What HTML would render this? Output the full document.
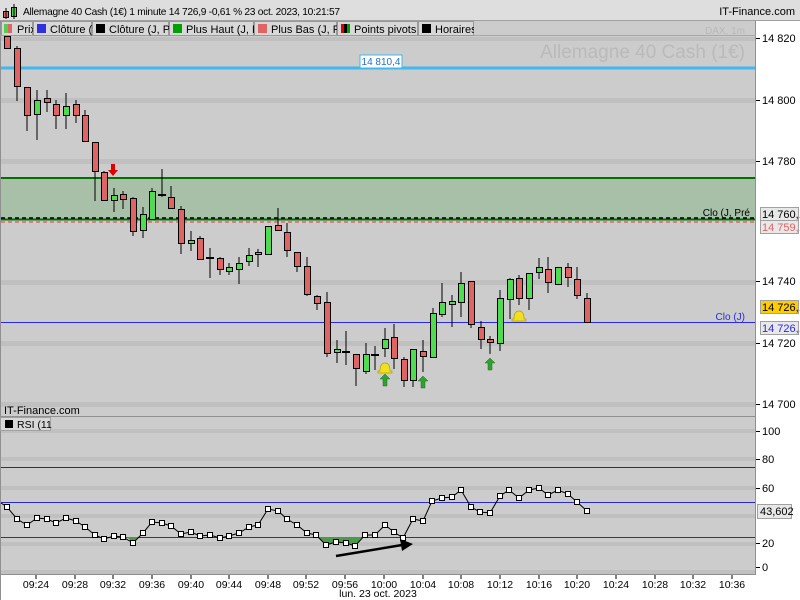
<!DOCTYPE html>
<html><head><meta charset="utf-8"><style>
*{margin:0;padding:0}
body{width:800px;height:600px;overflow:hidden;background:#fff;font-family:"Liberation Sans",sans-serif;position:relative}
svg{position:absolute;left:0;top:0}
text{font-family:"Liberation Sans",sans-serif}
</style></head><body>
<svg width="800" height="600" viewBox="0 0 800 600">
<!-- title bar -->
<rect x="0" y="0" width="800" height="21" fill="#dedede"/>
<line x1="0" y1="20.5" x2="800" y2="20.5" stroke="#a0a0a0"/>
<rect x="3.5" y="11.5" width="5" height="6" fill="#e06464" stroke="#000"/>
<line x1="6" y1="8" x2="6" y2="19" stroke="#000"/>
<rect x="11.5" y="7.5" width="5" height="9" fill="#50d050" stroke="#000"/>
<line x1="14" y1="4" x2="14" y2="19" stroke="#000"/>
<text x="23" y="15" font-size="10.2" fill="#000" textLength="317" lengthAdjust="spacing">Allemagne 40 Cash (1€) 1 minute 14 726,9 -0,61 % 23 oct. 2023, 10:21:57</text>
<text x="795" y="15" font-size="11" fill="#000" text-anchor="end">IT-Finance.com</text>
<!-- chart bg -->
<rect x="0" y="21" width="756" height="554" fill="#cccccc"/>
<rect x="756" y="21" width="44" height="579" fill="#fff"/>
<line x1="755.5" y1="21" x2="755.5" y2="575" stroke="#909090"/>
<line x1="0.5" y1="21" x2="0.5" y2="575" stroke="#909090"/>
<!-- bands -->
<g fill="#c0c0c0">
<rect x="1" y="37" width="754" height="4"/>
<rect x="1" y="98" width="754" height="5"/>
<rect x="1" y="159" width="754" height="5"/>
<rect x="1" y="280" width="754" height="5"/>
<rect x="1" y="341" width="754" height="5"/>
<rect x="1" y="402" width="754" height="5"/>
<rect x="1" y="457" width="754" height="4"/>
<rect x="1" y="486" width="754" height="4"/>
<rect x="1" y="514" width="754" height="4"/>
<rect x="1" y="542" width="754" height="4"/>
<rect x="1" y="570" width="754" height="4"/>
<rect x="1" y="429" width="754" height="4"/>
</g>
<!-- legend row -->
<line x1="0" y1="35.5" x2="756" y2="35.5" stroke="#a8a8a8"/>
<g font-size="11" fill="#000">
<svg x="1" y="21" width="32" height="15"><rect x="0.5" y="0.5" width="31" height="14" fill="#d8d8d8" stroke="#999"/>
<rect x="3" y="3" width="4" height="9" fill="#50d050"/><rect x="7" y="3" width="4" height="9" fill="#e06464"/>
<text x="16" y="12">Prix</text></svg>
<svg x="33" y="21" width="59" height="15"><rect x="0.5" y="0.5" width="58" height="14" fill="#d8d8d8" stroke="#999"/>
<rect x="4" y="3" width="9" height="9" fill="#3030e0"/><text x="17" y="12">Clôture (J, Pré</text></svg>
<svg x="92" y="21" width="77" height="15"><rect x="0.5" y="0.5" width="76" height="14" fill="#d8d8d8" stroke="#999"/>
<rect x="4" y="3" width="9" height="9" fill="#000"/><text x="17" y="12">Clôture (J, Pré</text></svg>
<svg x="169" y="21" width="85" height="15"><rect x="0.5" y="0.5" width="84" height="14" fill="#d8d8d8" stroke="#999"/>
<rect x="4" y="3" width="9" height="9" fill="#00a000"/><text x="17" y="12">Plus Haut (J, Pré</text></svg>
<svg x="254" y="21" width="83" height="15"><rect x="0.5" y="0.5" width="82" height="14" fill="#d8d8d8" stroke="#999"/>
<rect x="4" y="3" width="9" height="9" fill="#e06464"/><text x="17" y="12">Plus Bas (J, Pré</text></svg>
<svg x="337" y="21" width="81" height="15"><rect x="0.5" y="0.5" width="80" height="14" fill="#d8d8d8" stroke="#999"/>
<rect x="4" y="3" width="3" height="9" fill="#e00000"/><rect x="7" y="3" width="3" height="9" fill="#000"/><rect x="10" y="3" width="3" height="9" fill="#00a000"/><text x="17" y="12">Points pivots (J</text></svg>
<svg x="418" y="21" width="56" height="15"><rect x="0.5" y="0.5" width="55" height="14" fill="#d8d8d8" stroke="#999"/>
<rect x="4" y="3" width="9" height="9" fill="#000"/><text x="17" y="12">Horaires</text></svg>
</g>
<text x="745" y="34" font-size="10" fill="#b8b8b8" text-anchor="end">DAX, 1m</text>
<text x="745" y="58" font-size="19" fill="#bababa" text-anchor="end">Allemagne 40 Cash (1€)</text>
<!-- levels -->
<rect x="1" y="66.5" width="754" height="3" fill="#40b8f0"/>
<rect x="360" y="55" width="42" height="13" fill="#fff" stroke="#40b8f0"/>
<text x="381" y="65" font-size="10" fill="#2070d0" text-anchor="middle">14 810,4</text>
<rect x="1" y="178" width="754" height="41" fill="#a8c0a8"/>
<line x1="1" y1="178" x2="755" y2="178" stroke="#007000" stroke-width="2"/>
<line x1="1" y1="219.5" x2="755" y2="219.5" stroke="#007000" stroke-width="2"/>
<line x1="1" y1="218" x2="755" y2="218" stroke="#000" stroke-width="1.5" stroke-dasharray="4,3"/>
<line x1="1" y1="222" x2="755" y2="222" stroke="#e06464" stroke-width="1.5" stroke-dasharray="4,3"/>
<text x="750" y="216" font-size="10" fill="#000" text-anchor="end">Clo (J, Pré</text>
<line x1="1" y1="322.5" x2="755" y2="322.5" stroke="#2828e8"/>
<text x="745" y="320" font-size="10" fill="#2828e8" text-anchor="end">Clo (J)</text>
<!-- candles -->
<g stroke="#000" stroke-width="1">
<path d="M7 36V49M17 46V101M27 87V131M37 90V140M47 90V112M56 100V129M66 93V129M76 100V123M85 110V142M95 142V201M104 171V201M114 188V212M123 191V209M133 197V236M143 207V238M152 188V219M162 169V197M171 186V209M181 206V254M191 231V251M200 236V260M210 248V278M220 257V275M229 263V275M239 257V284M249 248V266M258 249V267M268 226V255M278 208V231M287 223V257M297 252V272M307 257V296M317 295V310M327 292V357M337 340V363M346 331V365M356 354V386M366 343V374M375 346V370M385 328V357M394 324V369M404 357V387M413 349V387M423 340V372M433 308V357M442 283V317M452 295V327M461 272V317M471 281V328M481 321V349M490 336V354M500 290V351M510 278V319M519 275V305M529 273V310M539 258V279M548 257V293M558 267V284M568 263V287M577 267V299M587 293V322"/>
<path d="M158 195H166M206 258H214M342 352H350M371 355H379" stroke-width="2"/>
</g>
<g stroke="#000" fill="#e06464">
<rect x="4.5" y="36.5" width="6" height="12"/>
<rect x="14.5" y="48.5" width="6" height="38"/>
<rect x="24.5" y="87.5" width="6" height="28"/>
<rect x="44.5" y="98.5" width="6" height="4"/>
<rect x="53.5" y="104.5" width="6" height="11"/>
<rect x="73.5" y="104.5" width="6" height="11"/>
<rect x="82.5" y="115.5" width="6" height="26"/>
<rect x="92.5" y="142.5" width="6" height="29"/>
<rect x="101.5" y="172.5" width="6" height="28"/>
<rect x="120.5" y="194.5" width="6" height="5"/>
<rect x="130.5" y="198.5" width="6" height="33"/>
<rect x="168.5" y="197.5" width="6" height="11"/>
<rect x="178.5" y="209.5" width="6" height="34"/>
<rect x="197.5" y="238.5" width="6" height="21"/>
<rect x="217.5" y="258.5" width="6" height="11"/>
<rect x="275.5" y="225.5" width="6" height="5"/>
<rect x="284.5" y="232.5" width="6" height="18"/>
<rect x="294.5" y="252.5" width="6" height="14"/>
<rect x="304.5" y="266.5" width="6" height="28"/>
<rect x="314.5" y="296.5" width="6" height="7"/>
<rect x="324.5" y="302.5" width="6" height="51"/>
<rect x="353.5" y="354.5" width="6" height="14"/>
<rect x="391.5" y="337.5" width="6" height="21"/>
<rect x="401.5" y="359.5" width="6" height="21"/>
<rect x="420.5" y="351.5" width="6" height="5"/>
<rect x="468.5" y="281.5" width="6" height="43"/>
<rect x="478.5" y="327.5" width="6" height="12"/>
<rect x="487.5" y="339.5" width="6" height="3"/>
<rect x="516.5" y="278.5" width="6" height="20"/>
<rect x="545.5" y="269.5" width="6" height="13"/>
<rect x="565.5" y="267.5" width="6" height="10"/>
<rect x="574.5" y="279.5" width="6" height="16"/>
<rect x="584.5" y="298.5" width="6" height="24"/>
</g>
<g stroke="#000" fill="#50dc50">
<rect x="34.5" y="100.5" width="6" height="14"/>
<rect x="63.5" y="106.5" width="6" height="9"/>
<rect x="111.5" y="195.5" width="6" height="5"/>
<rect x="140.5" y="214.5" width="6" height="16"/>
<rect x="149.5" y="191.5" width="6" height="28"/>
<rect x="188.5" y="240.5" width="6" height="3"/>
<rect x="226.5" y="267.5" width="6" height="4"/>
<rect x="236.5" y="263.5" width="6" height="6"/>
<rect x="246.5" y="255.5" width="6" height="6"/>
<rect x="255.5" y="252.5" width="6" height="2"/>
<rect x="265.5" y="226.5" width="6" height="28"/>
<rect x="334.5" y="349.5" width="6" height="3"/>
<rect x="363.5" y="354.5" width="6" height="17"/>
<rect x="382.5" y="339.5" width="6" height="9"/>
<rect x="410.5" y="349.5" width="6" height="31"/>
<rect x="430.5" y="313.5" width="6" height="44"/>
<rect x="439.5" y="302.5" width="6" height="12"/>
<rect x="449.5" y="301.5" width="6" height="3"/>
<rect x="458.5" y="283.5" width="6" height="19"/>
<rect x="497.5" y="298.5" width="6" height="45"/>
<rect x="507.5" y="279.5" width="6" height="20"/>
<rect x="526.5" y="273.5" width="6" height="25"/>
<rect x="536.5" y="267.5" width="6" height="5"/>
<rect x="555.5" y="267.5" width="6" height="17"/>
</g>
<!-- markers -->
<path d="M111 164h4v6h3l-5 6l-5-6h3z" fill="#e00000"/>
<g fill="#30a030" stroke="#207020" stroke-width="0.5">
<path d="M385 374l5 5h-3v7h-4v-7h-3z"/>
<path d="M423 376l5 5h-3v7h-4v-7h-3z"/>
<path d="M490 358l5 5h-3v7h-4v-7h-3z"/>
</g>
<g fill="#f0e020" stroke="#b0a000" stroke-width="0.7">
<path d="M380 371q0-8 5-8q5 0 5 8h2v2h-14v-2z"/>
<path d="M514 319q0-8 5-8q5 0 5 8h2v2h-14v-2z"/>
</g>
<!-- separator -->
<rect x="1" y="407" width="754" height="9" fill="#cccccc"/>
<text x="4" y="414" font-size="11" fill="#000">IT-Finance.com</text>
<line x1="0" y1="416.5" x2="756" y2="416.5" stroke="#909090"/>
<!-- price axis -->
<g font-size="11" fill="#000">
<path d="M756 38.5h4M756 100.5h4M756 161.5h4M756 281.5h4M756 343.5h4M756 404.5h4" stroke="#000"/>
<text x="762" y="42">14 820</text>
<text x="762" y="104">14 800</text>
<text x="762" y="165">14 780</text>
<text x="762" y="285">14 740</text>
<text x="762" y="347">14 720</text>
<text x="762" y="408">14 700</text>
<rect x="760.5" y="207.5" width="38" height="13" fill="#e8e8e8" stroke="#a0a0a0"/>
<text x="762" y="218">14 760,.</text>
<rect x="760.5" y="220.5" width="38" height="13" fill="#e8e8e8" stroke="#a0a0a0"/>
<text x="762" y="231" fill="#e06464">14 759,.</text>
<rect x="760.5" y="300.5" width="38" height="13" fill="#ffcc00" stroke="#a0a0a0"/>
<text x="762" y="311">14 726,.</text>
<rect x="760.5" y="321.5" width="38" height="13" fill="#e8e8e8" stroke="#a0a0a0"/>
<text x="762" y="332" fill="#2828e8">14 726,.</text>
</g>
<rect x="0.5" y="417.5" width="50" height="13" fill="#d8d8d8" stroke="#a0a0a0"/>
<rect x="5" y="420" width="8" height="8" fill="#000"/>
<text x="17" y="428" font-size="10.5" fill="#000">RSI (11</text>
<!-- RSI -->
<line x1="1" y1="467.5" x2="755" y2="467.5" stroke="#303050"/>
<line x1="1" y1="502.5" x2="755" y2="502.5" stroke="#2828d0"/>
<line x1="1" y1="537.5" x2="755" y2="537.5" stroke="#2828d0"/>
<path d="M126 537L128 538L133 543L138 537z M318 537L326 545L336 542L346 543L355 546L362 537z" fill="#4a9a4a"/>
<polyline fill="none" stroke="#000" stroke-width="1" points="1,503 7,507 17,519 27,525 37,518 47,519 56,523 66,518 76,521 85,527 95,535 104,539 114,536 123,537 133,543 143,533 152,522 162,523 171,526 181,534 191,532 200,536 210,535 220,538 229,536 239,533 249,527 258,525 268,509 278,511 287,519 297,525 307,533 316,535 326,545 336,542 346,543 355,546 365,535 375,535 385,525 394,532 403,538 413,519 423,521 432,501 442,498 452,497 461,490 471,507 480,512 490,513 500,496 509,490 519,498 529,490 539,488 548,495 558,490 568,494 577,502 587,511"/>
<g fill="#fff" stroke="#000" stroke-width="1">
<path d="M4.5 504.5h5v5h-5zM14.5 516.5h5v5h-5zM24.5 522.5h5v5h-5zM34.5 515.5h5v5h-5zM44.5 516.5h5v5h-5zM53.5 520.5h5v5h-5zM63.5 515.5h5v5h-5zM73.5 518.5h5v5h-5zM82.5 524.5h5v5h-5zM92.5 532.5h5v5h-5zM101.5 536.5h5v5h-5zM111.5 533.5h5v5h-5zM120.5 534.5h5v5h-5zM130.5 540.5h5v5h-5zM140.5 530.5h5v5h-5zM149.5 519.5h5v5h-5zM159.5 520.5h5v5h-5zM168.5 523.5h5v5h-5zM178.5 531.5h5v5h-5zM188.5 529.5h5v5h-5zM197.5 533.5h5v5h-5zM207.5 532.5h5v5h-5zM217.5 535.5h5v5h-5zM226.5 533.5h5v5h-5zM236.5 530.5h5v5h-5zM246.5 524.5h5v5h-5zM255.5 522.5h5v5h-5zM265.5 506.5h5v5h-5zM275.5 508.5h5v5h-5zM284.5 516.5h5v5h-5zM294.5 522.5h5v5h-5zM304.5 530.5h5v5h-5zM313.5 532.5h5v5h-5zM323.5 542.5h5v5h-5zM333.5 539.5h5v5h-5zM343.5 540.5h5v5h-5zM352.5 543.5h5v5h-5zM362.5 532.5h5v5h-5zM372.5 532.5h5v5h-5zM382.5 522.5h5v5h-5zM391.5 529.5h5v5h-5zM400.5 535.5h5v5h-5zM410.5 516.5h5v5h-5zM420.5 518.5h5v5h-5zM429.5 498.5h5v5h-5zM439.5 495.5h5v5h-5zM449.5 494.5h5v5h-5zM458.5 487.5h5v5h-5zM468.5 504.5h5v5h-5zM477.5 509.5h5v5h-5zM487.5 510.5h5v5h-5zM497.5 493.5h5v5h-5zM506.5 487.5h5v5h-5zM516.5 495.5h5v5h-5zM526.5 487.5h5v5h-5zM536.5 485.5h5v5h-5zM545.5 492.5h5v5h-5zM555.5 487.5h5v5h-5zM565.5 491.5h5v5h-5zM574.5 499.5h5v5h-5zM584.5 508.5h5v5h-5z"/>
</g>
<line x1="336" y1="556" x2="402" y2="545" stroke="#000" stroke-width="2.5"/>
<path d="M400 539L413 544L402 551z" fill="#000"/>
<g font-size="11" fill="#000">
<path d="M756 431.5h4M756 459.5h4M756 488.5h4M756 543.5h4M756 567.5h4" stroke="#000"/>
<text x="762" y="435">100</text>
<text x="762" y="463">80</text>
<text x="762" y="492">60</text>
<text x="762" y="547">20</text>
<text x="762" y="571">0</text>
<rect x="757.5" y="504.5" width="34" height="14" fill="#e8e8e8" stroke="#a0a0a0"/>
<text x="760" y="515">43,602</text>
</g>
<!-- time axis -->
<rect x="0" y="575" width="756" height="25" fill="#fff"/>
<line x1="0" y1="574.5" x2="756" y2="574.5" stroke="#909090"/>
<line x1="0.5" y1="575" x2="0.5" y2="600" stroke="#909090"/>
<g font-size="10.5" fill="#000" text-anchor="middle">
<path d="M36 575v4M75 575v4M113 575v4M152 575v4M191 575v4M229 575v4M268 575v4M306 575v4M345 575v4M384 575v4M423 575v4M461 575v4M500 575v4M539 575v4M577 575v4M616 575v4M655 575v4M693 575v4M732 575v4" stroke="#000"/>
<text x="36" y="588">09:24</text><text x="75" y="588">09:28</text><text x="113" y="588">09:32</text><text x="152" y="588">09:36</text><text x="191" y="588">09:40</text><text x="229" y="588">09:44</text><text x="268" y="588">09:48</text><text x="306" y="588">09:52</text><text x="345" y="588">09:56</text><text x="384" y="588">10:00</text><text x="423" y="588">10:04</text><text x="461" y="588">10:08</text><text x="500" y="588">10:12</text><text x="539" y="588">10:16</text><text x="577" y="588">10:20</text><text x="616" y="588">10:24</text><text x="655" y="588">10:28</text><text x="693" y="588">10:32</text><text x="732" y="588">10:36</text>
<text x="378" y="597">lun. 23 oct. 2023</text>
</g>
</svg>
</body></html>
